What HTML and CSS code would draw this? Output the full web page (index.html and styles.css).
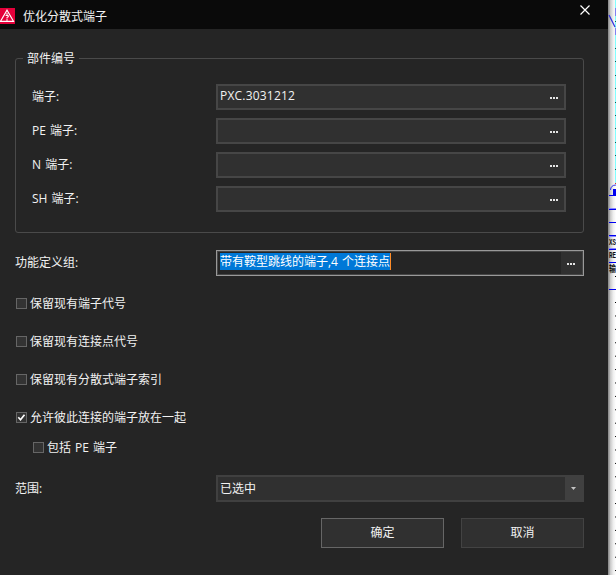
FILE: index.html
```html
<!DOCTYPE html>
<html lang="zh-CN">
<head>
<meta charset="utf-8">
<title>优化分散式端子</title>
<link rel="stylesheet" href="styles.css">
</head>
<body>
<div class="screen">
<main class="dialog">
  <header class="titlebar">
    <svg class="logo" width="15" height="16" viewBox="0 0 15 16"><path fill="#e4003a" d="M0 0h15v16H0z"/><path d="M.5 13.3h13L7 2.3z" fill="none" stroke="#fff" stroke-width="1.2"/><path d="M7 5v2M5.6 7.5h2.7v1.6H7v1.4M7 11v2" fill="none" stroke="#fff" stroke-width="1"/></svg>
    <h1 class="title">优化分散式端子</h1>
    <svg class="close" width="10" height="10" viewBox="0 0 10 10"><path d="M.5.5l9 9M9.500.5l-9 9" fill="none" stroke="#fff" stroke-width="1.2"/></svg>
  </header>
  <div class="content">
    <fieldset class="parts">
      <legend>部件编号</legend>
      <div class="row"><span class="label">端子:</span><div class="field"><span class="value latin">PXC.3031212</span><span class="more"><i></i><i></i><i></i></span></div></div>
      <div class="row"><span class="label spaced">PE 端子:</span><div class="field"><span class="more"><i></i><i></i><i></i></span></div></div>
      <div class="row"><span class="label spaced">N 端子:</span><div class="field"><span class="more"><i></i><i></i><i></i></span></div></div>
      <div class="row"><span class="label spaced">SH 端子:</span><div class="field"><span class="more"><i></i><i></i><i></i></span></div></div>
    </fieldset>
    <div class="row group-row"><span class="label">功能定义组:</span><div class="field focused"><span class="selected">带有鞍型跳线的端子,4 个连接点</span><span class="more"><i></i><i></i><i></i></span></div></div>
    <div class="check"><span class="box"></span>保留现有端子代号</div>
    <div class="check"><span class="box"></span>保留现有连接点代号</div>
    <div class="check"><span class="box"></span>保留现有分散式端子索引</div>
    <div class="check"><span class="box"><svg width="9" height="9" viewBox="0 0 9 9"><path d="M1.300 4.300l2.200 2.400 4-5" fill="none" stroke="#fff" stroke-width="1.700"/></svg></span>允许彼此连接的端子放在一起</div>
    <div class="check nested"><span class="box"></span><span class="spaced">包括 PE 端子</span></div>
    <div class="row range-row"><span class="label">范围:</span><div class="field combo"><span class="value">已选中</span><span class="drop"><svg width="5" height="3" viewBox="0 0 5 3"><path d="M0 0h5L2.500 3z" fill="#c4c4c4"/></svg></span></div></div>
    <div class="buttons"><button class="primary">确定</button><button>取消</button></div>
  </div>
</main>
<aside class="drawing">
  <svg width="8" height="575" viewBox="0 0 8 575">
    <defs>
      <linearGradient id="shade"><stop offset="0" stop-color="#888"/><stop offset=".13" stop-color="#999"/><stop offset=".3" stop-color="#c9c9c9"/><stop offset=".65" stop-color="#eee"/><stop offset="1" stop-color="#fff"/></linearGradient>
      <pattern id="ticks" width="2" height="13.400" patternUnits="userSpaceOnUse" y="315.500"><path d="M0 0h2v1H0z" fill="#000"/></pattern>
    </defs>
    <path fill="url(#shade)" d="M0 0h8v575H0z"/>
    <path fill="#80ffff" d="M7 0h1v183H7z"/>
    <path fill="#8080f0" d="M7 8h1v8H7zM7 28h1v7H7z"/>
    <path d="M1 15l6 12" stroke="#33d" stroke-width="1.300" fill="none"/>
    <path fill="#155" d="M7 21h1v1H7zM7 48h1v1H7zM7 61h1v1H7zM7 75h1v1H7zM7 88h1v1H7zM7 102h1v1H7zM7 115h1v1H7zM7 128h1v1H7zM7 142h1v1H7zM7 155h1v1H7zM7 169h1v1H7z"/>
    <path fill="#d33" d="M7 183h1v1H7z"/>
    <path d="M2.500 190c0-3 2-5 5.500-5" stroke="#33e" fill="none"/>
    <path fill="#0000f0" d="M5 189h3v7H5zM1 195h7v1H1zM1 209h7v1H1zM1 222h7v1H1zM1 235h7v1H1zM1 249h7v1H1zM1 262h7v1H1zM1 289h7v1H1z"/>
    <path fill="#88f" d="M1 208h7v1H1zM1 236h7v1H1zM1 248h7v1H1z"/>
    <g class="mark"><text x="1" y="245" textLength="7" lengthAdjust="spacingAndGlyphs">XS</text><text x="1" y="258" textLength="7" lengthAdjust="spacingAndGlyphs">RE</text><text x="1" y="272" textLength="7" lengthAdjust="spacingAndGlyphs">输</text></g>
    <path fill="#000" d="M7 276h1v1H7zM7 302h1v1H7z"/>
    <path fill="url(#ticks)" d="M7 315h1v260H7z"/>
  </svg>
</aside>
</div>
</body>
</html>
```
FILE: styles.css
```css
* { box-sizing: border-box; }
body {
  margin: 0;
  background: #252525;
  color: #f2f2f2;
  font: 12px/16px "Open Sans", "Noto Sans CJK SC", sans-serif;
}
.screen { display: flex; width: 616px; height: 575px; overflow: hidden; }
.dialog { width: 608px; background: #252525; }
.drawing { width: 8px; background: #fff; }
.drawing svg { display: block; }
.mark { font: bold 9px "Liberation Mono", "Noto Sans CJK SC", monospace; fill: #111; }
.titlebar {
  display: flex;
  height: 29px;
  padding: 8px 18.5px 0 0;
  align-items: flex-start;
  background: #0a0a0a;
}
.title { flex: 1; margin: 1px 0 0 8px; font-size: 12px; font-weight: 400; line-height: 16px; }
.close { margin-top: -3.5px; }
.content { padding: 22px 24px 0 15px; }
.parts {
  display: flex;
  flex-direction: column;
  gap: 8px;
  height: 182px;
  margin: 0;
  padding: 18px 17px 0 16px;
  border: 1px solid #4a4a4a;
  border-radius: 3px;
}
.parts legend { height: 15px; margin-left: -9px; padding: 0 4px; }
.row { display: flex; align-items: center; }
.label { flex: 1; }
.spaced { word-spacing: 1px; }
.field {
  display: flex;
  width: 350px;
  height: 26px;
  padding-left: 2px;
  border: 2px solid #464646;
  background: #303030;
}
.value { line-height: 20px; }
.latin { letter-spacing: .2px; }
.more {
  display: flex;
  gap: 1px;
  width: 23px;
  margin-left: auto;
  padding: 11px 0 0 9px;
}
.more i { width: 2px; height: 2px; background: #e4e4e4; }
.group-row { margin-top: 17px; }
.group-row .field, .range-row .field { width: 368px; }
.focused { padding: 0; border: 1px solid #999; background: #252525; box-shadow: inset 0 0 0 1px #464646; }
.selected { align-self: flex-start; height: 17px; margin: 2px 0 0 3px; border-right: 1px solid #ff8c28; background: #0078d7; color: #fff; line-height: 18px; word-spacing: 1px; }
.focused .more { width: 21px; height: 22px; margin: 1px 1px 0 auto; padding: 11px 0 0 6px; background: #303030; }
.check { display: flex; align-items: center; height: 16px; margin-top: 22px; padding-left: 1px; gap: 3px; }
.group-row + .check { margin-top: 20px; }
.check.nested { margin-top: 14px; padding-left: 18px; }
.box { width: 11px; height: 11px; margin-bottom: 1px; border: 1px solid #666; background: #333; }
.box svg { display: block; }
.range-row { margin-top: 19px; }
.combo { height: 27px; padding-left: 2px; border-color: #404040; }
.combo .value { line-height: 23px; }
.drop { display: flex; width: 17px; margin-left: auto; align-items: center; justify-content: center; background: #404040; }
.buttons { display: flex; justify-content: flex-end; gap: 17px; margin-top: 16px; }
.buttons button {
  width: 123px;
  height: 30px;
  padding: 0;
  border: 1px solid #434343;
  border-radius: 0;
  background: #303030;
  color: inherit;
  font: inherit;
}
.buttons .primary { border-color: #666; }
```
